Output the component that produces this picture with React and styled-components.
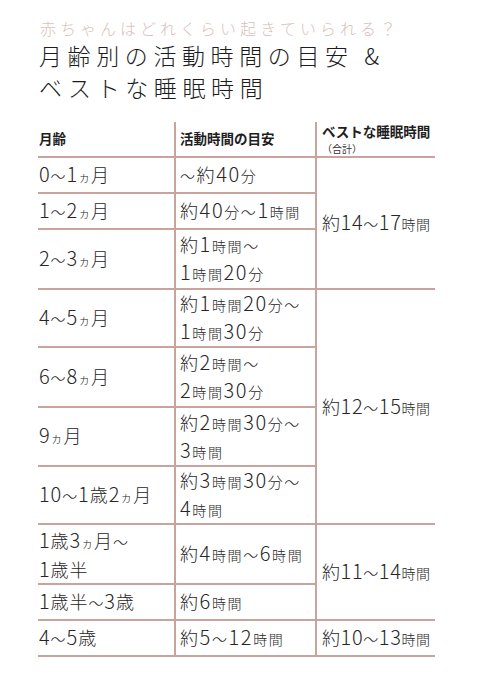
import React from 'react'
import styled, { createGlobalStyle } from 'styled-components'

const LINE = '#c9a49c'

const GlobalStyle = createGlobalStyle`
  html, body {
    margin: 0;
    padding: 0;
    background: #fff;
  }
  body {
    font-family: "Noto Sans CJK JP", "Noto Sans", sans-serif;
    color: #222;
  }
`

const Page = styled.div`
  width: 501px;
  height: 700px;
  box-sizing: border-box;
  padding: 17px 0 0 38px;
`

const SubTitle = styled.div`
  font-size: 16px;
  line-height: 22px;
  letter-spacing: 4px;
  color: #d8bfbb;
  font-weight: 300;
  padding-left: 2px;
`

const Title = styled.h1`
  margin: 0;
  padding-left: 1px;
  font-size: 23px;
  line-height: 32px;
  letter-spacing: 5.6px;
  font-weight: 300;
  color: #1c1c1c;
`

const Grid = styled.div`
  margin-top: 19px;
  display: grid;
  grid-template-columns: 136px 141px 120px;
  grid-template-rows: 36px 36px 36px 60px 58px 60px 59px 58px 60px 36px 36px;
  width: 397px;
`

const SPACING = [0.9, 1.6, 0.6]
const PAD = [1, 4, 5]

const Cell = styled.div`
  box-sizing: border-box;
  grid-column: ${(p) => p.$col + 1};
  grid-row: ${(p) => p.$row + 1} / span ${(p) => p.$span || 1};
  border-bottom: 2px solid ${LINE};
  border-left: ${(p) => (p.$col > 0 ? `2px solid ${LINE}` : 'none')};
  padding-left: ${(p) => PAD[p.$col]}px;
  display: flex;
  align-items: center;
  color: #262626;
  font-size: 18px;
  line-height: 26px;
  letter-spacing: ${(p) => SPACING[p.$col]}px;
  white-space: pre;
  font-weight: 300;
`

const HeadCell = styled(Cell)`
  flex-direction: column;
  justify-content: ${(p) => (p.$top ? 'flex-start' : 'center')};
  align-items: flex-start;
  font-size: 13.5px;
  line-height: 19.5px;
  font-weight: 700;
  letter-spacing: 0;
  color: #1e1e1e;
`

const Note = styled.span`
  display: block;
  font-size: 10px;
  line-height: 14.5px;
  font-weight: 400;
  color: #333;
`

const Text = styled.div``

const Num = styled.span`
  font-size: 20px;
`

const Unit = styled.span`
  font-size: ${(p) => p.$size}px;
`

const Tilde = styled.span`
  font-size: 15px;
`

const UNIT_SIZE = { 時間: 14, 分: 15, ヵ: 12 }

function Fmt({ text }) {
  const parts = text.split(/(\d+|時間|分|ヵ|〜|\n)/).filter(Boolean)
  return (
    <Text>
      {parts.map((s, i) => {
        if (s === '\n') return <br key={i} />
        if (/^\d+$/.test(s)) return <Num key={i}>{s}</Num>
        if (s === '〜') return <Tilde key={i}>{s}</Tilde>
        if (UNIT_SIZE[s]) return <Unit key={i} $size={UNIT_SIZE[s]}>{s}</Unit>
        return <span key={i}>{s}</span>
      })}
    </Text>
  )
}

const rows = [
  ['0〜1ヵ月', '〜約40分'],
  ['1〜2ヵ月', '約40分〜1時間'],
  ['2〜3ヵ月', '約1時間〜\n1時間20分'],
  ['4〜5ヵ月', '約1時間20分〜\n1時間30分'],
  ['6〜8ヵ月', '約2時間〜\n2時間30分'],
  ['9ヵ月', '約2時間30分〜\n3時間'],
  ['10〜1歳2ヵ月', '約3時間30分〜\n4時間'],
  ['1歳3ヵ月〜\n1歳半', '約4時間〜6時間'],
  ['1歳半〜3歳', '約6時間'],
  ['4〜5歳', '約5〜12時間'],
]

const sleep = [
  { start: 0, span: 3, text: '約14〜17時間' },
  { start: 3, span: 4, text: '約12〜15時間' },
  { start: 7, span: 2, text: '約11〜14時間' },
  { start: 9, span: 1, text: '約10〜13時間' },
]

export default function App() {
  return (
    <>
      <GlobalStyle />
      <Page>
        <SubTitle>赤ちゃんはどれくらい起きていられる？</SubTitle>
        <Title>
          月齢別の活動時間の目安 &amp;
          <br />
          ベストな睡眠時間
        </Title>
        <Grid>
          <HeadCell $row={0} $col={0}>月齢</HeadCell>
          <HeadCell $row={0} $col={1}>活動時間の目安</HeadCell>
          <HeadCell $row={0} $col={2} $top>
            ベストな睡眠時間
            <Note>（合計）</Note>
          </HeadCell>
          {rows.map(([age, active], i) => (
            <React.Fragment key={age}>
              <Cell $row={i + 1} $col={0}>
                <Fmt text={age} />
              </Cell>
              <Cell $row={i + 1} $col={1}>
                <Fmt text={active} />
              </Cell>
            </React.Fragment>
          ))}
          {sleep.map((s) => (
            <Cell key={s.text} $row={s.start + 1} $col={2} $span={s.span}>
              <Fmt text={s.text} />
            </Cell>
          ))}
        </Grid>
      </Page>
    </>
  )
}
